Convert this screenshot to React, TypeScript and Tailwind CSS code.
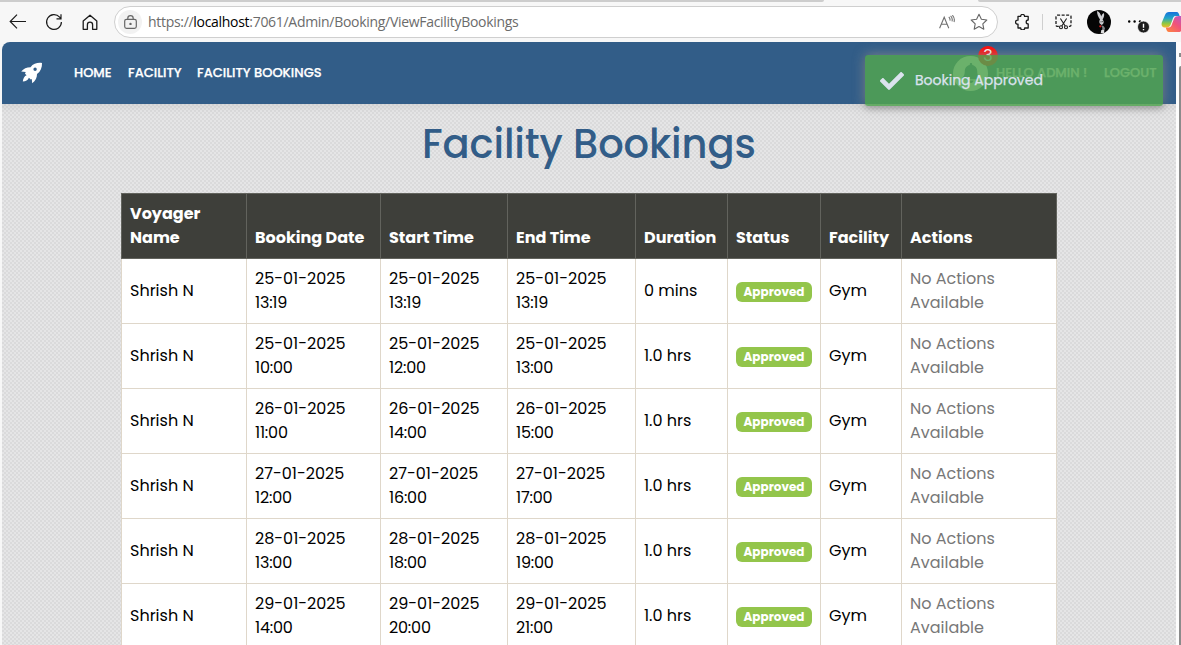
import React from "react";
import { FaBell, FaCheck } from "react-icons/fa";

type Booking = { booked: [string, string]; start: [string, string]; end: [string, string]; duration: string };

const bookings: Booking[] = [
  { booked: ["25-01-2025", "13:19"], start: ["25-01-2025", "13:19"], end: ["25-01-2025", "13:19"], duration: "0 mins" },
  { booked: ["25-01-2025", "10:00"], start: ["25-01-2025", "12:00"], end: ["25-01-2025", "13:00"], duration: "1.0 hrs" },
  { booked: ["26-01-2025", "11:00"], start: ["26-01-2025", "14:00"], end: ["26-01-2025", "15:00"], duration: "1.0 hrs" },
  { booked: ["27-01-2025", "12:00"], start: ["27-01-2025", "16:00"], end: ["27-01-2025", "17:00"], duration: "1.0 hrs" },
  { booked: ["28-01-2025", "13:00"], start: ["28-01-2025", "18:00"], end: ["28-01-2025", "19:00"], duration: "1.0 hrs" },
  { booked: ["29-01-2025", "14:00"], start: ["29-01-2025", "20:00"], end: ["29-01-2025", "21:00"], duration: "1.0 hrs" },
];

const columns = "grid grid-cols-[126px_134px_127px_128px_92px_93px_81px_155px]";
const headCell = "flex items-end border-r border-b border-[#62635d] px-2 py-2";
const bodyCell = "flex items-center border-r border-b border-[#dfd7ca] px-2 py-2";

function Stamp({ value }: { value: [string, string] }) {
  return (
    <div>
      <div>{value[0]}</div>
      <div className="tracking-[-0.2px]">{value[1]}</div>
    </div>
  );
}

function BrowserBar() {
  return (
    <div className="relative flex h-[42px] shrink-0 items-center bg-[#f7f7f7] pt-[2px] text-[#1b1b1b]">
      <div className="absolute top-0 left-0 h-[2px] w-[824px] rounded-br bg-[#cdcdcd]" />
      <div className="absolute top-0 right-0 h-[2px] w-[203px] rounded-bl bg-[#cdcdcd]" />
      <svg className="ml-[9px] h-4 w-[18px] shrink-0" viewBox="0 0 18 16" fill="none" stroke="currentColor" strokeWidth="1.2">
        <path d="M17 7.5H1.5M8 0.7L1.2 7.5L8 14.3" />
      </svg>
      <svg className="ml-[18px] h-[18px] w-[18px] shrink-0" viewBox="0 0 18 18" fill="none" stroke="currentColor" strokeWidth="1.2">
        <path d="M16.4 9A7.4 7.4 0 1 1 14.6 4.2L16 5.8M16 1.3V5.8H11.5" />
      </svg>
      <svg className="ml-[19px] h-[17px] w-4 shrink-0" viewBox="0 0 16 17" fill="none" stroke="currentColor" strokeWidth="1.3" strokeLinejoin="round">
        <path d="M1.2 7L8 1.2L14.8 7V15.3H10.6V10.7C10.6 9 9.4 8.2 8 8.2S5.4 9 5.4 10.7V15.3H1.2Z" />
      </svg>
      <div className="ml-4 flex h-8 w-[884px] shrink-0 items-center rounded-full border border-[#cfcfcf] bg-white pl-[3px]">
        <div className="flex h-6 w-6 items-center justify-center rounded-full bg-[#f2f2f2] text-[#666]">
          <svg className="h-[15px] w-[13px]" viewBox="0 0 13 15" fill="none" stroke="currentColor" strokeWidth="1.2">
            <rect x="0.7" y="4.3" width="11.6" height="9" rx="1.8" />
            <path d="M3.8 4.3V3.2A2.7 2.5 0 0 1 9.2 3.2V4.3" />
            <circle cx="6.5" cy="8.9" r="0.6" fill="currentColor" />
          </svg>
        </div>
        <div className="mt-[-2px] ml-[6px] font-['Open_Sans',sans-serif] text-[14px] tracking-[-0.3px] text-[#6b6b6b]">
          https://<span className="text-black">localhost</span>:7061/Admin/Booking/ViewFacilityBookings
        </div>
        <svg className="mr-[15px] ml-auto h-[15px] w-4 shrink-0" viewBox="0 0 16 15" fill="none" stroke="#707070" strokeWidth="1.1">
          <path d="M0.6 13.2L5.2 2.2L9.8 13.2M2.3 9.2H8.1M9.8 1.8Q11.4 3.4 10.9 5.6M11.6 0.9Q13.9 3.2 13 6.3M13.4 0.2Q16.2 3.4 15 7" />
        </svg>
        <svg className="mr-[9px] h-[18px] w-[18px] shrink-0" viewBox="0 0 18 18" fill="none" stroke="#666" strokeWidth="1.1" strokeLinejoin="round">
          <path d="M9 1.3L11.4 6.3L16.8 7L12.8 10.8L13.8 16.2L9 13.6L4.2 16.2L5.2 10.8L1.2 7L6.6 6.3Z" />
        </svg>
      </div>
      <svg className="ml-[17px] h-4 w-[15px] shrink-0" viewBox="0 0 15 16" fill="none" stroke="currentColor" strokeWidth="1.3" strokeLinejoin="round">
        <path d="M3 2.4H5.6A2 2 0 0 1 9.6 2.4H13.2V6A2 2 0 0 0 13.2 10V14H9.7A2 2 0 0 1 5.7 14H3V10.1A2 2 0 1 1 3 6.2Z" />
      </svg>
      <div className="ml-[12px] h-4 w-px shrink-0 bg-[#cfcfcf]" />
      <svg className="ml-[12px] h-4 w-[17px] shrink-0" viewBox="0 0 17 16" fill="none" stroke="currentColor" strokeWidth="1.3">
        <path d="M3.8 12.4H2.4Q1 12.4 1 11V2.6Q1 1.2 2.4 1.2H14.6Q16 1.2 16 2.6V11Q16 12.4 14.6 12.4H13.2" strokeDasharray="3 1.5" />
        <path d="M5.4 4.5L10.2 12M11.6 4.5L6.8 12" strokeWidth="1.1" />
        <circle cx="6" cy="13.2" r="1.5" strokeWidth="1.1" />
        <circle cx="11" cy="13.2" r="1.5" strokeWidth="1.1" />
      </svg>
      <svg className="ml-[15px] h-6 w-6 shrink-0" viewBox="0 0 24 24">
        <circle cx="12" cy="12" r="12" fill="#050505" />
        <path d="M10 1C12.2 1.4 13.8 4 14.2 6.6C14.6 5 15.4 3.8 16.8 3C17.8 5.2 16.8 7.6 15.6 9.4C17 11 17 12.8 16 14L14.6 15L12.8 13.6C12 11.8 12.4 10.4 13 9.4C11.2 7 10 4 10 1Z" fill="#cccdd0" />
        <path d="M14.2 15.5Q17 15 18 18.5L16.8 21.5L14.8 21L15.4 18Z" fill="#808287" />
        <path d="M14.3 20H17.2V23H13.8Z" fill="#dededf" />
        <path d="M14 11.2V12.4M15.4 11V12.2" stroke="#222" strokeWidth="0.7" />
        <circle cx="13.3" cy="16.3" r="1.1" fill="#d22" />
      </svg>
      <svg className="ml-[17px] h-4 w-[22px] shrink-0 overflow-visible" viewBox="0 0 22 16">
        <circle cx="1.2" cy="7.5" r="1.2" />
        <circle cx="6.6" cy="7.5" r="1.2" />
        <circle cx="12" cy="7.5" r="1.2" />
        <circle cx="15.5" cy="13" r="6" fill="#1d1d1d" stroke="#f7f7f7" strokeWidth="0.8" />
        <path d="M15.5 9.7V13.8M15.5 15V16.2" stroke="white" strokeWidth="1.4" />
      </svg>
      <svg className="ml-[11px] h-6 w-[26px] shrink-0" viewBox="0 0 26 24">
        <defs>
          <linearGradient id="cool" x1="0" y1="0" x2="0" y2="1">
            <stop offset="0" stopColor="#1670dc" />
            <stop offset="0.4" stopColor="#22a5c8" />
            <stop offset="0.75" stopColor="#93c83e" />
            <stop offset="1" stopColor="#f6b82c" />
          </linearGradient>
          <linearGradient id="warm" x1="1" y1="0" x2="0" y2="1">
            <stop offset="0" stopColor="#a85bdc" />
            <stop offset="0.5" stopColor="#f0527b" />
            <stop offset="1" stopColor="#ff8a3a" />
          </linearGradient>
        </defs>
        <path d="M8 2H15.5C17.5 2 18 4 18.6 6H14.5C12.5 6 12 8 11.4 10L9.5 15C8.7 17 7 17.5 4.5 17.5C1.3 17.5 0 15.5 0.8 12.5L4 5C4.8 3 6 2 8 2Z" fill="url(#cool)" />
        <path d="M17 22H8C6.2 22 5.3 20 4.8 17.5H7.5C9.8 17.5 10.3 16 11 14L13 8.8C13.8 6.6 15.4 6 18 6H22C25 6 25.5 9 24.5 12L22 18C21 21 19.5 22 17 22Z" fill="url(#warm)" />
      </svg>
    </div>
  );
}

function RocketIcon({ className }: { className: string }) {
  return (
    <svg className={className} viewBox="0 0 22 22" fill="currentColor">
      <path
        fillRule="evenodd"
        d="M21 1C17 0.5 12.4 1.2 9.5 5.2C5.6 5.3 2.5 6.6 0.2 9.6L4.7 9.9L4 11.7L5.6 13.2C3.4 14 2.2 16 1.8 19.4C4.8 19.3 6.8 18.4 7.9 15.7L9.8 17.4L10.8 17L11.2 21.2C14.6 18.6 16.1 15.6 16 12C19.6 9.6 21.2 5.4 21 1ZM14.1 5.6A1.7 1.7 0 1 1 14.1 9A1.7 1.7 0 1 1 14.1 5.6Z"
      />
    </svg>
  );
}

function NavBar() {
  return (
    <nav className="flex h-[62px] shrink-0 items-center rounded-tl-lg bg-[#325d88] pl-5 text-[13px] font-medium text-white">
      <RocketIcon className="-ml-px h-[22px] w-[22px]" />
      <div className="ml-[31px] w-[54px] [-webkit-text-stroke:0.25px]">HOME</div>
      <div className="w-[69px] [-webkit-text-stroke:0.25px]">FACILITY</div>
      <div className="[-webkit-text-stroke:0.25px]">FACILITY BOOKINGS</div>
      <div className="relative ml-auto flex h-[35px] w-[35px] items-center justify-center rounded-full bg-white">
        <FaBell className="h-5 w-5 text-[#325d88]" />
        <div className="absolute -top-[10px] left-[25px] flex h-5 w-5 items-center justify-center rounded-full bg-[#ff0a0a] text-[16px] font-normal">3</div>
      </div>
      <div className="ml-2 w-[108px] [-webkit-text-stroke:0.25px]">HELLO ADMIN !</div>
      <div className="w-[72px] [-webkit-text-stroke:0.25px]">LOGOUT</div>
    </nav>
  );
}

function Toast() {
  return (
    <div className="absolute top-[55px] left-[865px] flex h-[51px] w-[298px] items-center rounded-[3px] bg-[#51a351]/85 pl-[15px] shadow-[0_0_12px_rgba(153,153,153,0.8),0_2px_6px_rgba(0,0,0,0.25)]">
      <FaCheck className="h-6 w-6 text-[#dbe3ee]" />
      <span className="ml-[11px] text-[14px] text-[#dbe3ee] [-webkit-text-stroke:0.25px]">Booking Approved</span>
    </div>
  );
}

export default function App() {
  return (
    <div className="relative flex h-[645px] w-[1181px] flex-col overflow-hidden bg-[#f7f7f7] font-[Poppins,Inter,sans-serif]">
      <BrowserBar />
      <div className="flex min-h-0 flex-1 pl-[2px]">
        <div className="flex w-[1174px] flex-col">
          <NavBar />
          <main className="flex min-h-0 flex-1 flex-col bg-[#e5e5e6] bg-[conic-gradient(#dadadb_25%,transparent_0_50%,#dadadb_0_75%,transparent_0)] bg-[size:4px_4px] pl-[119px] shadow-[inset_0_12px_10px_-10px_rgba(0,0,0,0.08)]">
            <h1 className="mt-[13px] ml-[301px] h-[58px] shrink-0 text-[40px] leading-[55px] font-medium tracking-[-0.1px] whitespace-nowrap text-[#325d88]">Facility Bookings</h1>
            <section className="mt-[18px] w-[936px] shrink-0 bg-white text-[16px] leading-6 text-black">
              <div className={columns + " h-[66px] border-t border-[#62635d] bg-[#3e3f3a] font-bold text-white"}>
                <div className={headCell + " border-l"}>Voyager<br />Name</div>
                <div className={headCell}>Booking Date</div>
                <div className={headCell}>Start Time</div>
                <div className={headCell}>End Time</div>
                <div className={headCell}>Duration</div>
                <div className={headCell}>Status</div>
                <div className={headCell}>Facility</div>
                <div className={headCell}>Actions</div>
              </div>
              {bookings.map((b, i) => (
                <div key={i} className={columns + " h-[65px]"}>
                  <div className={bodyCell + " border-l"}>Shrish N</div>
                  <div className={bodyCell}><Stamp value={b.booked} /></div>
                  <div className={bodyCell}><Stamp value={b.start} /></div>
                  <div className={bodyCell}><Stamp value={b.end} /></div>
                  <div className={bodyCell}>{b.duration}</div>
                  <div className={bodyCell}>
                    <span className="mt-[2px] flex h-5 w-[76px] shrink-0 items-center justify-center rounded-md bg-[#93c54b] text-[12px] font-bold text-white">Approved</span>
                  </div>
                  <div className={bodyCell}>Gym</div>
                  <div className={bodyCell + " text-[#777777]"}>No Actions<br />Available</div>
                </div>
              ))}
            </section>
          </main>
        </div>
        <div className="flex w-[5px] flex-col items-end overflow-hidden bg-[#fcfcfc]">
          <div className="mt-[11px] h-1 w-[2px] bg-[#8b8b8b]" />
          <div className="mt-[9px] w-[2px] flex-1 rounded-tl bg-[#8b8b8b]" />
        </div>
      </div>
      <Toast />
    </div>
  );
}
